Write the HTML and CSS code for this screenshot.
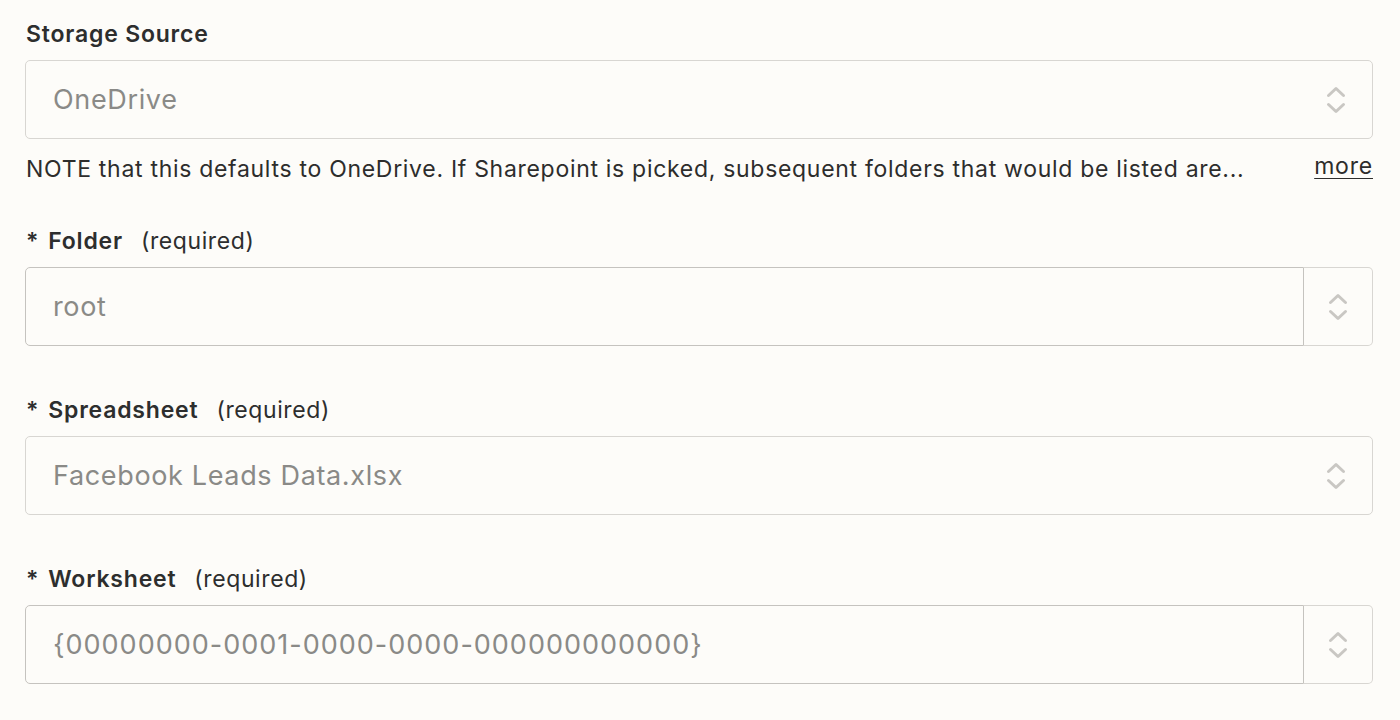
FILE: index.html
```html
<!DOCTYPE html>
<html lang="en">
<head>
<meta charset="utf-8">
<title>Form</title>
<link rel="stylesheet" href="styles.css">
</head>
<body>
<main class="form">
  <section class="field">
    <div class="label"><span class="name">Storage Source</span></div>
    <div class="select">
      <span class="value">OneDrive</span>
      <svg class="chev" viewBox="0 0 20 30" width="20" height="30" aria-hidden="true"><path d="M2.5 10.5 L10 3.5 L17.5 10.5 M2.5 19.5 L10 26.5 L17.5 19.5"/></svg>
    </div>
    <div class="note">
      <span class="note-text">NOTE that this defaults to OneDrive. If Sharepoint is picked, subsequent folders that would be listed are...</span>
      <a class="more" href="#">more</a>
    </div>
  </section>

  <section class="field">
    <div class="label"><span class="star">*</span><span class="name">Folder</span><span class="req">(required)</span></div>
    <div class="split">
      <div class="input"><span class="value">root</span></div>
      <div class="btn"><svg class="chev" viewBox="0 0 20 30" width="20" height="30" aria-hidden="true"><path d="M2.5 10.5 L10 3.5 L17.5 10.5 M2.5 19.5 L10 26.5 L17.5 19.5"/></svg></div>
    </div>
  </section>

  <section class="field">
    <div class="label"><span class="star">*</span><span class="name">Spreadsheet</span><span class="req">(required)</span></div>
    <div class="select">
      <span class="value">Facebook Leads Data.xlsx</span>
      <svg class="chev" viewBox="0 0 20 30" width="20" height="30" aria-hidden="true"><path d="M2.5 10.5 L10 3.5 L17.5 10.5 M2.5 19.5 L10 26.5 L17.5 19.5"/></svg>
    </div>
  </section>

  <section class="field">
    <div class="label"><span class="star">*</span><span class="name">Worksheet</span><span class="req">(required)</span></div>
    <div class="split">
      <div class="input"><span class="value value-id">{00000000-0001-0000-0000-000000000000}</span></div>
      <div class="btn"><svg class="chev" viewBox="0 0 20 30" width="20" height="30" aria-hidden="true"><path d="M2.5 10.5 L10 3.5 L17.5 10.5 M2.5 19.5 L10 26.5 L17.5 19.5"/></svg></div>
    </div>
  </section>
</main>
</body>
</html>
```

FILE: styles.css
```css
html, body {
  margin: 0;
  padding: 0;
  background: #fdfcf9;
}
body {
  font-family: Inter, "Noto Sans", "Liberation Sans", sans-serif;
  color: #2d2e2e;
}
.form {
  padding: 20px 27px 0 25px;
  display: flex;
  flex-direction: column;
  gap: 50px;
}
.field {
  display: flex;
  flex-direction: column;
}
.label {
  font-size: 23px;
  letter-spacing: 0.8px;
  line-height: 28px;
  height: 28px;
  margin-bottom: 12px;
  padding-left: 1px;
  display: flex;
  align-items: baseline;
}
.star {
  font-weight: 600;
  margin-right: 9px;
}
.name {
  font-weight: 600;
}
.req {
  font-weight: 400;
  margin-left: 18px;
  letter-spacing: 0.6px;
}
.select {
  height: 79px;
  box-sizing: border-box;
  border: 1px solid #d8d6d2;
  border-radius: 5px;
  display: flex;
  align-items: center;
  justify-content: space-between;
  padding: 0 26px 0 27px;
}
.value {
  font-size: 27px;
  letter-spacing: 0.65px;
  color: #8a8a87;
}
.value-id {
  letter-spacing: 1px;
}
.chev {
  display: block;
  fill: none;
  stroke: #c9c7c3;
  stroke-width: 3;
  stroke-linecap: round;
  stroke-linejoin: round;
}
.note {
  margin-top: 15px;
  margin-bottom: -7px;
  display: flex;
  justify-content: space-between;
  align-items: center;
  font-size: 23px;
  letter-spacing: 0.7px;
  line-height: 30px;
  padding-left: 1px;
}
.note-text {
  color: #2d2d2c;
}
.more {
  color: #2d2d2c;
  text-decoration: underline;
  text-underline-offset: 4px;
  text-decoration-thickness: 1px;
  margin-top: -6px;
  letter-spacing: 0.8px;
}
.split {
  height: 79px;
  display: flex;
}
.input {
  flex: 1;
  box-sizing: border-box;
  border: 1.5px solid #c5c3bf;
  border-radius: 5px 0 0 5px;
  display: flex;
  align-items: center;
  padding-left: 27px;
}
.btn {
  width: 69px;
  box-sizing: border-box;
  border: 1px solid #d8d6d2;
  border-left: none;
  border-radius: 0 5px 5px 0;
  display: flex;
  align-items: center;
  justify-content: center;
}
```
